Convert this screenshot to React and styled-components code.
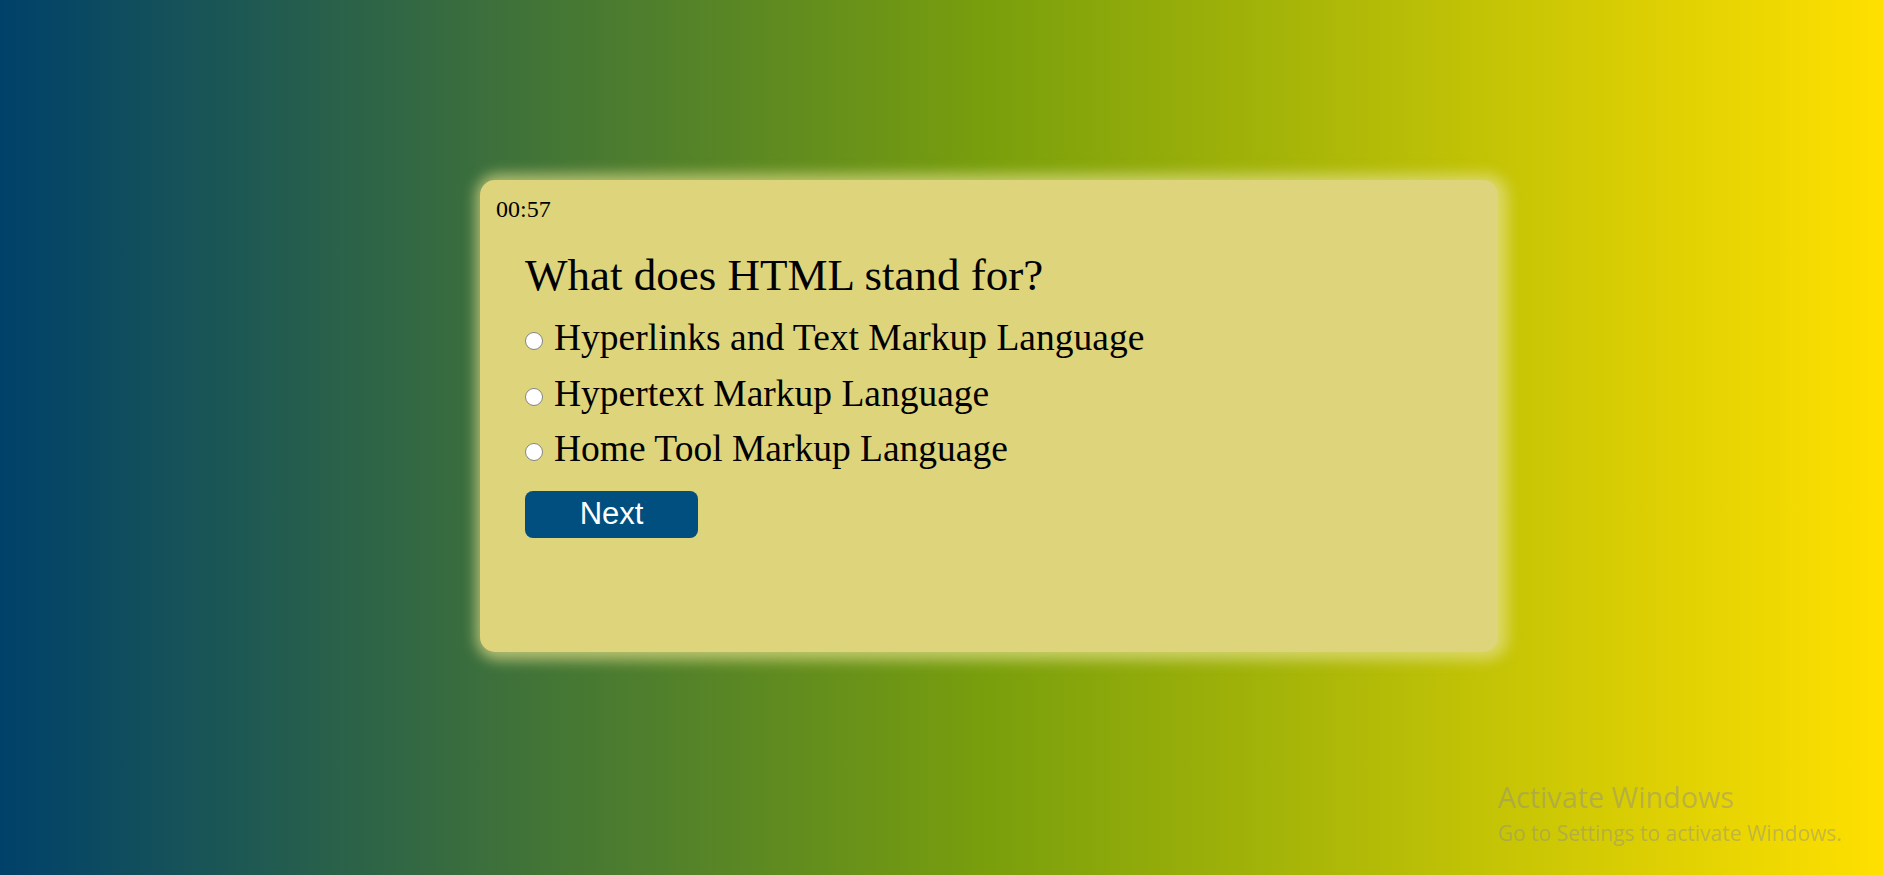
import React, { useState } from "react";
import styled, { createGlobalStyle } from "styled-components";

const GlobalStyle = createGlobalStyle`
  html, body {
    margin: 0;
    padding: 0;
  }
  body {
    font-family: "Liberation Serif", "Times New Roman", serif;
    background: linear-gradient(to right, #00416a 0%, #799f0c 52.5%, #ffe000 100%);
    min-height: 100vh;
  }
`;

const Page = styled.div`
  height: 875px;
  padding: 180px 0 0 480px;
  box-sizing: border-box;
  overflow: hidden;
`;

const Card = styled.div`
  width: 1018px;
  height: 472px;
  box-sizing: border-box;
  padding: 16px;
  background-color: #ddd47b;
  border-radius: 15px;
  box-shadow: 3px 1px 14px 7px rgba(228, 224, 140, 0.7);
`;

const Timer = styled.div`
  font-size: 24px;
  line-height: 1.107;
`;

const Body = styled.div`
  margin: 28px 0 0 29px;
`;

const Question = styled.h2`
  margin: 0 0 17px;
  font-size: 45px;
  font-weight: normal;
  line-height: 1.107;
`;

const Option = styled.label`
  display: flex;
  align-items: center;
  font-size: 37.5px;
  line-height: 1.107;
  margin-bottom: 14px;
  cursor: pointer;
`;

const Radio = styled.input`
  appearance: none;
  flex: none;
  box-sizing: border-box;
  width: 18px;
  height: 18px;
  margin: 6px 11px 0 0;
  border: 1.5px solid #858585;
  border-radius: 50%;
  background: #fff;
  cursor: pointer;

  &:checked {
    border-color: #0075ff;
    border-width: 5px;
  }
`;

const NextButton = styled.button`
  display: block;
  margin-top: 21px;
  width: 173px;
  height: 47px;
  border: none;
  border-radius: 8px;
  background-color: #014f7f;
  color: #fff;
  font-family: "Liberation Sans", Arial, sans-serif;
  font-size: 31px;
  cursor: pointer;
`;

const Watermark = styled.div`
  position: fixed;
  left: 1498px;
  top: 779px;
  color: rgba(140, 140, 140, 0.45);
  font-family: "Open Sans", "Noto Sans", sans-serif;
  pointer-events: none;
`;

const WatermarkTitle = styled.div`
  font-size: 28.8px;
  line-height: 36px;
`;

const WatermarkSub = styled.div`
  margin-top: 4px;
  font-size: 21px;
  line-height: 28px;
`;

const options = [
  "Hyperlinks and Text Markup Language",
  "Hypertext Markup Language",
  "Home Tool Markup Language",
];

export default function App() {
  const [picked, setPicked] = useState(null);

  return (
    <>
      <GlobalStyle />
      <Page>
        <Card>
          <Timer>00:57</Timer>
          <Body>
            <Question>What does HTML stand for?</Question>
            {options.map((opt, i) => (
              <Option key={opt}>
                <Radio
                  type="radio"
                  name="answer"
                  checked={picked === i}
                  onChange={() => setPicked(i)}
                />
                {opt}
              </Option>
            ))}
            <NextButton>Next</NextButton>
          </Body>
        </Card>
      </Page>
      <Watermark>
        <WatermarkTitle>Activate Windows</WatermarkTitle>
        <WatermarkSub>Go to Settings to activate Windows.</WatermarkSub>
      </Watermark>
    </>
  );
}
